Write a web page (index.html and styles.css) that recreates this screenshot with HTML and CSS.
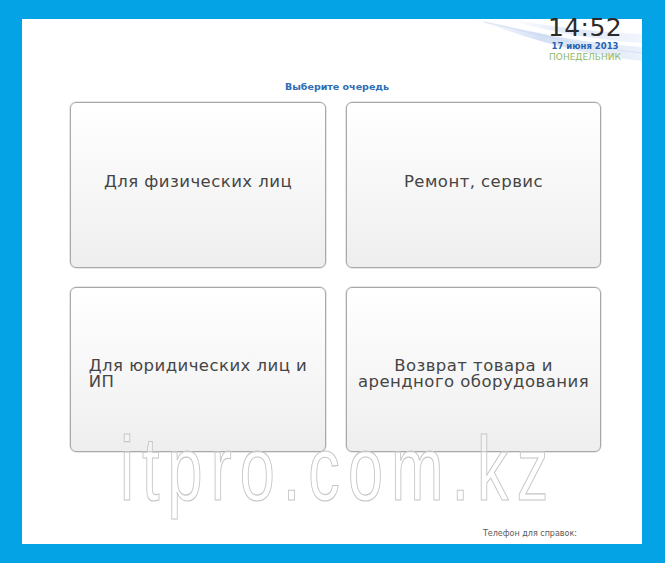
FILE: index.html
```html
<!DOCTYPE html>
<html lang="ru">
<head>
<meta charset="utf-8">
<title>Выберите очередь</title>
<link rel="stylesheet" href="styles.css">
</head>
<body>
<div class="frame">
  <div class="panel">
    <svg class="wave" width="196" height="52" viewBox="0 0 196 52">
      <defs>
        <linearGradient id="g1" x1="0" y1="0" x2="1" y2="0">
          <stop offset="0" stop-color="#d4e0f5" stop-opacity="0"/>
          <stop offset="0.4" stop-color="#cfdcf3" stop-opacity="0.9"/>
          <stop offset="1" stop-color="#dfe8f7" stop-opacity="0.6"/>
        </linearGradient>
        <linearGradient id="g2" x1="0" y1="0" x2="1" y2="0">
          <stop offset="0" stop-color="#dde6f7" stop-opacity="0"/>
          <stop offset="0.5" stop-color="#d9e3f5" stop-opacity="0.85"/>
          <stop offset="1" stop-color="#e4ebf8" stop-opacity="0.5"/>
        </linearGradient>
      </defs>
      <path d="M28 0 C 75 9, 112 22, 196 28 L 196 42 C 125 34, 82 19, 28 0 Z" fill="url(#g1)"/>
      <path d="M58 0 C 100 6, 142 13, 196 15 L 196 24 C 140 20, 98 11, 58 0 Z" fill="url(#g2)"/>
      <path d="M38 3 C 85 13, 122 26, 196 34" fill="none" stroke="#c8d7f0" stroke-width="1.2" opacity="0.6"/>
    </svg>
    <header class="header">
      <div class="clock">
        <div class="time">14:52</div>
        <div class="date">17 июня 2013</div>
        <div class="day">ПОНЕДЕЛЬНИК</div>
      </div>
    </header>
    <main class="content">
      <h1 class="title">Выберите очередь</h1>
      <div class="grid">
        <button class="btn btn-one"><span class="label">Для физических лиц</span></button>
        <button class="btn btn-one"><span class="label">Ремонт, сервис</span></button>
        <button class="btn btn-two"><span class="label label-left">Для юридических лиц и<br>ИП</span></button>
        <button class="btn btn-two"><span class="label">Возврат товара и<br>арендного оборудования</span></button>
      </div>
    </main>
    <footer class="footer">Телефон для справок:</footer>
    <div class="watermark">itpro.com.kz</div>
  </div>
</div>
</body>
</html>
```
FILE: styles.css
```css
html, body {
  margin: 0;
  padding: 0;
}
body {
  background: #04a3e5;
  width: 665px;
  height: 563px;
  overflow: hidden;
  font-family: "DejaVu Sans", "Noto Sans", sans-serif;
}
.frame {
  padding: 19px 23px 19px 22px;
}
.panel {
  position: relative;
  background: #ffffff;
  height: 525px;
  display: flex;
  flex-direction: column;
}
.wave {
  position: absolute;
  left: 424px;
  top: 0;
}
.header {
  position: relative;
  height: 42px;
  display: flex;
  justify-content: flex-end;
  padding-right: 18px;
}
.clock {
  margin-top: -3px;
  text-align: center;
  width: 78px;
}
.time {
  font-size: 25px;
  line-height: 24px;
  color: #2b2b2b;
  letter-spacing: 0.4px;
}
.date {
  font-size: 8.5px;
  line-height: 10px;
  font-weight: bold;
  color: #2563b0;
  margin-top: 1px;
}
.day {
  font-size: 9px;
  line-height: 10px;
  color: #92b86a;
  margin-top: 1px;
}
.content {
  margin-left: 48px;
  width: 531px;
}
.title {
  margin: 20px 0 0 0;
  padding-left: 3px;
  font-size: 9.5px;
  line-height: 12px;
  font-weight: bold;
  color: #2f6db5;
  text-align: center;
}
.grid {
  margin-top: 9px;
  display: grid;
  grid-template-columns: 256px 255px;
  grid-template-rows: 166px 165px;
  column-gap: 20px;
  row-gap: 19px;
}
.btn {
  display: flex;
  align-items: center;
  justify-content: center;
  margin: 0;
  padding: 0 8px;
  border: 1px solid #a9a9a9;
  border-radius: 6px;
  background: linear-gradient(to bottom, #ffffff 0%, #f7f7f7 50%, #eeeeee 100%);
  box-shadow: 0 0 0 0.5px #d0d0d0;
  font-family: "DejaVu Sans", "Noto Sans", sans-serif;
  font-size: 16.5px;
  line-height: 16px;
  letter-spacing: 0.45px;
  color: #454545;
  cursor: pointer;
}
.btn-one {
  padding-bottom: 7px;
}
.btn-two {
  padding-top: 9px;
}
.label {
  display: inline-block;
  text-align: center;
}
.label-left {
  text-align: left;
}
.footer {
  margin-top: auto;
  padding: 0 65px 5px 0;
  text-align: right;
  font-size: 8px;
  line-height: 10px;
  color: #5a5a5a;
}
.watermark {
  position: absolute;
  left: 98px;
  top: 400px;
  font-family: "Liberation Sans", Arial, sans-serif;
  font-size: 90px;
  line-height: 100px;
  letter-spacing: 11.5px;
  color: rgba(255, 255, 255, 0.35);
  -webkit-text-stroke: 1.2px #c6c6c6;
  transform: scaleX(0.7);
  transform-origin: 0 0;
  white-space: nowrap;
  pointer-events: none;
}
```
